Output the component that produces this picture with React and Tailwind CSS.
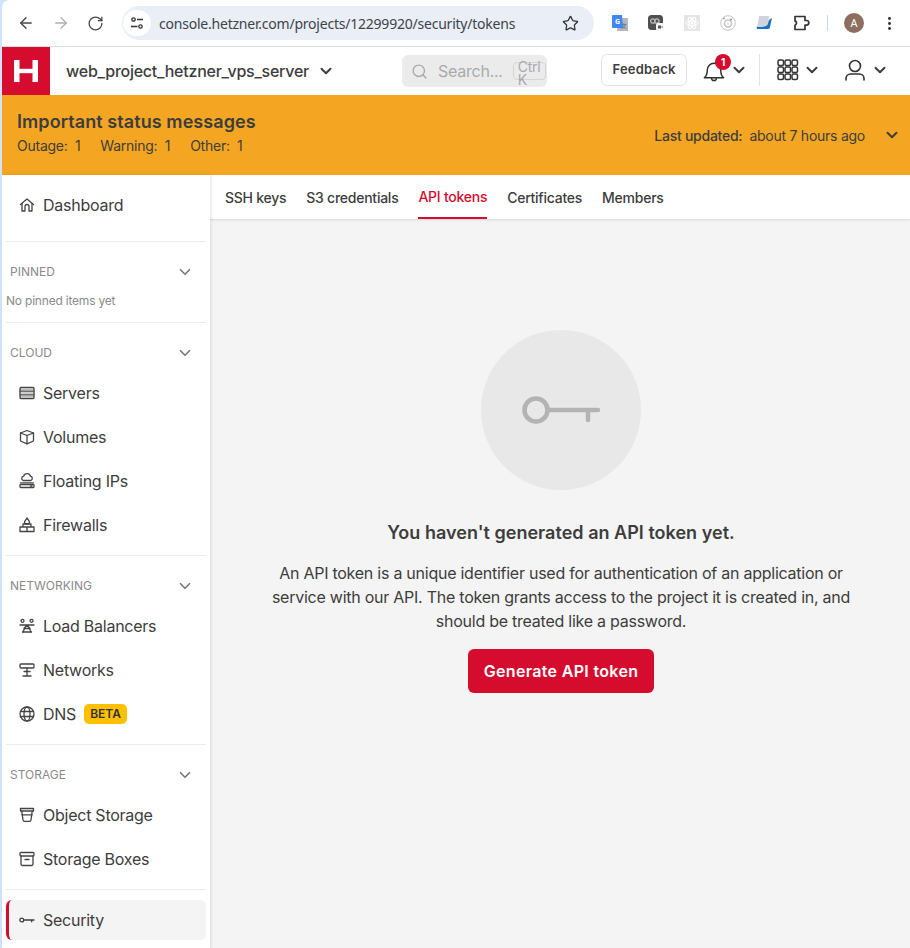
import React from "react";
import { ArrowLeft, ArrowRight, RotateCw, Star, Search, ChevronDown, EllipsisVertical } from "lucide-react";

const INTER = "font-['Inter',sans-serif]";

const Ico = ({ children, size = 18, sw = 1.3 }) => (
  <svg width={size} height={size} viewBox="0 0 18 18" fill="none" stroke="currentColor" strokeWidth={sw} strokeLinecap="round" strokeLinejoin="round" className="shrink-0">
    {children}
  </svg>
);

const HomeIcon = () => (
  <Ico>
    <path d="M2.500 8.500 9 3l6.500 5.500" />
    <path d="M4 7.500V15h3v-4.500a2 2 0 0 1 4 0V15h3V7.500" />
  </Ico>
);
const ServersIcon = () => (
  <Ico>
    <rect x="2" y="3.500" width="14" height="11" rx="1" />
    <path d="M2 7.200h14M2 10.800h14" />
    <path d="M2.500 5.300h13M2.500 9h13M2.500 12.700h13" strokeOpacity=".35" />
  </Ico>
);
const BoxIcon = () => (
  <Ico>
    <path d="M9 2.500 15.500 5v8L9 15.800 2.500 13V5z" />
    <path d="M2.500 5 9 7.500 15.500 5M9 7.500v8.300" />
  </Ico>
);
const FloatingIcon = () => (
  <Ico>
    <path d="M5 8.500a2.300 2.300 0 0 1 .6-4.300 3.600 3.600 0 0 1 6.900 0A2.300 2.300 0 0 1 13 8.500z" />
    <path d="M2.500 10.800h13" />
    <rect x="2" y="12.500" width="14" height="3" rx=".8" />
    <path d="M12.500 14h1.500" />
  </Ico>
);
const FirewallIcon = () => (
  <Ico>
    <path d="M9 2c.3 1.300 2.500 2 2.500 4.200 0 1-.8 1.800-2.500 1.800s-2.500-.8-2.500-1.800C6.500 4.800 8.500 3.800 9 2z" />
    <path d="M5 8h8v3H5zM2 11h14v4.500H2zM9 11v4.500" />
  </Ico>
);
const LoadBalancerIcon = () => (
  <Ico>
    <circle cx="4.500" cy="3.800" r="1.500" />
    <circle cx="13.500" cy="3.800" r="1.500" />
    <path d="M2 8h14M9 8l-3 3.500h6zM4.500 15h9" />
    <path d="M6.500 11.500 5 15M11.500 11.500 13 15" />
  </Ico>
);
const NetworkIcon = () => (
  <Ico>
    <rect x="2" y="3" width="14" height="4" rx="1" />
    <path d="M9 7v8M5 15h8M6 10.500h6" />
  </Ico>
);
const GlobeIcon = () => (
  <Ico>
    <circle cx="9" cy="9" r="7" />
    <ellipse cx="9" cy="9" rx="3" ry="7" />
    <path d="M2.500 6.500h13M2.500 11.500h13" />
  </Ico>
);
const BucketIcon = () => (
  <Ico>
    <path d="M2.500 2.500h13v2.500h-13z" />
    <path d="M3.800 5l1.200 9a1.500 1.500 0 0 0 1.500 1.300h5a1.500 1.500 0 0 0 1.500-1.300l1.200-9" />
    <path d="M3.800 8.800h10.400" />
  </Ico>
);
const StorageBoxIcon = () => (
  <Ico>
    <rect x="2" y="2.500" width="14" height="3.500" rx="1" />
    <path d="M3 6v8a1.500 1.500 0 0 0 1.500 1.500h9A1.500 1.500 0 0 0 15 14V6M7 9.500h4" />
  </Ico>
);
const KeyIcon = () => (
  <Ico>
    <circle cx="3.800" cy="9" r="1.900" />
    <path d="M5.700 9h10.300M13.700 9v1.800" />
  </Ico>
);

const NavItem = ({ icon, label, badge }) => (
  <div className="flex h-11 items-center gap-[7px] pl-[12px] text-[16px] text-[#3d3d3d]">
    <span className="text-[#444]">{icon}</span>
    <span>{label}</span>
    {badge && (
      <span className="ml-[1px] rounded-[5px] bg-[#ffc000] px-[6px] py-[1px] text-[12px] leading-[18px] font-semibold tracking-normal text-[#333]">
        {badge}
      </span>
    )}
  </div>
);

const SectionHead = ({ label }) => (
  <div className="flex h-[30px] items-center justify-between pr-[12px] pl-[4px] text-[12px] tracking-normal text-[#8a8a8a]">
    <span>{label}</span>
    <ChevronDown size={18} strokeWidth={2.2} className="text-[#777]" />
  </div>
);

const BrowserBar = () => (
  <div className="flex h-[47px] items-center rounded-tl-lg border-b border-[#dcdcdc] bg-white font-['Noto_Sans',sans-serif]">
    <div className="flex items-center gap-[17px] pr-[18px] pl-[15px] text-[#474747]">
      <ArrowLeft size={18} strokeWidth={1.8} />
      <ArrowRight size={18} strokeWidth={1.8} className="text-[#b0b0b0]" />
      <RotateCw size={17} strokeWidth={1.8} />
    </div>
    <div className="flex h-[34px] w-[472px] items-center rounded-full bg-[#e9eef7] pr-[15px] pl-[1px] text-[14px] tracking-[-0.22px] text-[#3f4349]">
      <span className="flex h-[26px] w-[28px] items-center justify-center rounded-full bg-white">
        <svg width="14" height="14" viewBox="0 0 14 14" fill="none" stroke="#333" strokeWidth="1.300">
          <circle cx="3.500" cy="3.500" r="1.700" />
          <circle cx="10.500" cy="10.500" r="1.700" />
          <path d="M7 3.500h6M1 10.500h6.500" />
        </svg>
      </span>
      <span className="ml-[8px] flex-1 truncate">console.hetzner.com/projects/12299920/security/tokens</span>
      <Star size={17} strokeWidth={1.8} className="text-[#333]" />
    </div>
    <div className="ml-[18px] flex items-center gap-[20px]">
      <svg width="16" height="16" viewBox="0 0 16 16">
        <rect x="5" y="3" width="11" height="13" fill="#b4b8bd" />
        <text x="12" y="13" fontSize="6" fill="#555" textAnchor="middle">文</text>
        <path d="M1 0h9l1 13H1a1 1 0 0 1-1-1V1a1 1 0 0 1 1-1z" fill="#4285f4" />
        <text x="5.300" y="9" fontSize="7" fontWeight="700" fill="#fff" textAnchor="middle">G</text>
      </svg>
      <svg width="16" height="16" viewBox="0 0 16 16">
        <rect width="15" height="15" rx="3.500" fill="#4f4f4f" />
        <circle cx="4.800" cy="6" r="2.200" fill="none" stroke="#bbb" strokeWidth="1.300" />
        <circle cx="8.800" cy="6" r="2.200" fill="none" stroke="#bbb" strokeWidth="1.300" />
        <rect x="8" y="8" width="8" height="8" rx="2" fill="#f5f5f5" />
        <path d="M10 10.500h3v3h-3zM13 12l1.500-1v2z" fill="#555" />
      </svg>
      <svg width="16" height="16" viewBox="0 0 16 16">
        <rect width="16" height="16" fill="#e6e6e6" />
        <g fill="none" stroke="#fff" strokeWidth="1">
          <ellipse cx="8" cy="8" rx="6" ry="2.400" />
          <ellipse cx="8" cy="8" rx="6" ry="2.400" transform="rotate(60 8 8)" />
          <ellipse cx="8" cy="8" rx="6" ry="2.400" transform="rotate(120 8 8)" />
        </g>
        <circle cx="8" cy="8" r="1.200" fill="#fff" />
      </svg>
      <svg width="16" height="16" viewBox="0 0 16 16" fill="none" stroke="#c4c4c4">
        <circle cx="8" cy="8" r="7.300" />
        <circle cx="8" cy="8.500" r="3.500" strokeWidth="1.500" />
        <circle cx="8" cy="8.500" r="1" fill="#ddd" stroke="none" />
        <circle cx="11" cy="4.500" r="1.100" fill="#999" stroke="none" />
        <circle cx="4" cy="3.500" r="1" fill="#aaa" stroke="none" />
      </svg>
      <svg width="16" height="16" viewBox="0 0 16 16">
        <path d="M3 1h10l-1 10H1.500z" fill="#cfd4da" />
        <path d="M13 5l3-2-2 9a2 2 0 0 1-2 2H1l-.5-2.500c4 .5 9 .5 11-1.500z" fill="#1a6fc4" />
      </svg>
    </div>
    <svg width="18" height="18" viewBox="0 0 18 18" fill="none" stroke="#333" strokeWidth="1.700" strokeLinejoin="round" className="ml-[20px] shrink-0">
      <path d="M3 2.500h10v4h1.500a2.300 2.300 0 0 1 0 4.600H13v4.400H3v-4.300a2.300 2.300 0 0 0 0-4.300z" />
    </svg>
    <span className="ml-[17px] h-[16px] w-[1px] bg-[#c5d7f0]" />
    <span className="ml-[16px] flex h-5 w-5 items-center justify-center rounded-full bg-[#8d6e5f] text-[11px] text-white">A</span>
    <EllipsisVertical size={17} strokeWidth={2.2} className="ml-[17px] text-[#333]" />
  </div>
);

const AppHeader = () => (
  <div className="flex h-[48px] items-center bg-white">
    <div className="flex h-[48px] w-[48px] shrink-0 items-center justify-center bg-[#d50c2d]">
      <svg width="24" height="22" viewBox="0 0 24 22" fill="#fff">
        <rect width="5.500" height="22" rx=".5" />
        <rect x="18.500" width="5.500" height="22" rx=".5" />
        <rect y="8.800" width="24" height="4.400" />
      </svg>
    </div>
    <span className="ml-[16px] text-[16px] font-medium text-[#3d3d3d]">web_project_hetzner_vps_server</span>
    <ChevronDown size={18} strokeWidth={2.6} className="mx-[8px] text-[#3d3d3d]" />
    <div className="ml-[59px] flex h-8 w-[145px] shrink-0 items-center rounded-md bg-[#ebebeb] pl-[9px] text-[16px] text-[#aaa]">
      <Search size={17} strokeWidth={2} className="shrink-0 text-[#aaa]" />
      <span className="ml-[10px]">Search...</span>
      <span className="ml-[10px] h-[18px] w-[33px] shrink-0 rounded-[4px] border border-[#d5d5d5] pl-[4px] text-[14px] leading-[13px]">
        <span className="-mt-[3px] block">Ctrl K</span>
      </span>
    </div>
    <div className="ml-[54px] -mt-[2px] flex h-[32px] w-[86px] shrink-0 items-center justify-center rounded-md border border-[#e3e3e3] text-[13px] font-semibold tracking-[0.2px] text-[#3d3d3d]">
      Feedback
    </div>
    <div className="relative ml-[16px] -mt-[1px] text-[#2f2f2f]">
      <svg width="22" height="23" viewBox="0 0 22 24" fill="none" stroke="currentColor" strokeWidth="1.500" strokeLinecap="round" strokeLinejoin="round">
        <path d="M1 19.500c2-1.500 3-3 3-8a7 7 0 0 1 14 0c0 5 1 6.500 3 8z" />
        <path d="M8.500 20a2.500 2.500 0 0 0 5 0" />
      </svg>
      <span className="absolute top-[-5px] left-[12px] flex h-4 w-4 items-center justify-center rounded-full bg-[#d50c2d] text-[10px] font-bold tracking-normal text-white">1</span>
    </div>
    <ChevronDown size={18} strokeWidth={2.6} className="ml-[5px] -mt-[2px] text-[#3d3d3d]" />
    <span className="ml-[11px] -mt-[2px] h-[32px] w-[1px] bg-[#e3e3e3]" />
    <svg width="22" height="22" viewBox="0 0 22 22" fill="none" stroke="#333" strokeWidth="1.500" className="ml-[17px] -mt-[2px] shrink-0">
      {[1, 8, 15].map((x) =>
        [1, 8, 15].map((y) => <rect key={`${x}-${y}`} x={x} y={y} width="5.500" height="5.500" rx="1.500" />)
      )}
    </svg>
    <ChevronDown size={18} strokeWidth={2.6} className="ml-[4px] -mt-[2px] text-[#3d3d3d]" />
    <svg width="22" height="22" viewBox="0 0 22 22" fill="none" stroke="#333" strokeWidth="1.600" strokeLinecap="round" className="ml-[23px] -mt-[2px] shrink-0">
      <circle cx="11" cy="7" r="5.500" />
      <path d="M2 21v-1.500A4.500 4.500 0 0 1 6.500 15h9a4.500 4.500 0 0 1 4.500 4.500V21" />
    </svg>
    <ChevronDown size={18} strokeWidth={2.6} className="ml-[5px] -mt-[2px] text-[#3d3d3d]" />
  </div>
);

const StatusBanner = () => (
  <div className="flex h-[80px] items-center justify-between bg-[#f4a623] pr-[9px] pl-[15px] text-[#3d3d3d]">
    <div className="-mt-[5px]">
      <div className="text-[18px] leading-[24px] font-semibold tracking-[0.08px]">Important status messages</div>
      <div className="mt-[2px] flex gap-[20px] text-[14px] leading-[20px]">
        <span>Outage:&nbsp; 1</span>
        <span>Warning:&nbsp; 1</span>
        <span>Other:&nbsp; 1</span>
      </div>
    </div>
    <div className="flex items-center text-[14px]">
      <span className="font-medium">Last updated:</span>
      <span className="ml-[7px]">about 7 hours ago</span>
      <ChevronDown size={18} strokeWidth={2.6} className="ml-[18px]" />
    </div>
  </div>
);

const Sidebar = () => (
  <aside className="z-10 w-[208px] shrink-0 bg-white pr-[4px] pl-[4px] shadow-[1px_0_3px_rgba(0,0,0,0.12)]">
    <div className="border-b border-[#ececec] pt-[8px] pb-[14px]">
      <NavItem icon={<HomeIcon />} label="Dashboard" />
    </div>
    <div className="h-[81px] border-b border-[#ececec] pt-[15px]">
      <SectionHead label="PINNED" />
      <div className="mt-[6px] text-[12px] leading-[16px] tracking-[-0.2px] text-[#8a8a8a]">No pinned items yet</div>
    </div>
    <div className="border-b border-[#ececec] pt-[15px] pb-[8px]">
      <SectionHead label="CLOUD" />
      <div className="pt-[3px]">
        <NavItem icon={<ServersIcon />} label="Servers" />
        <NavItem icon={<BoxIcon />} label="Volumes" />
        <NavItem icon={<FloatingIcon />} label="Floating IPs" />
        <NavItem icon={<FirewallIcon />} label="Firewalls" />
      </div>
    </div>
    <div className="border-b border-[#ececec] pt-[15px] pb-[8px]">
      <SectionHead label="NETWORKING" />
      <div className="pt-[3px]">
        <NavItem icon={<LoadBalancerIcon />} label="Load Balancers" />
        <NavItem icon={<NetworkIcon />} label="Networks" />
        <NavItem icon={<GlobeIcon />} label="DNS" badge="BETA" />
      </div>
    </div>
    <div className="border-b border-[#ececec] pt-[15px] pb-[8px]">
      <SectionHead label="STORAGE" />
      <div className="pt-[3px]">
        <NavItem icon={<BucketIcon />} label="Object Storage" />
        <NavItem icon={<StorageBoxIcon />} label="Storage Boxes" />
      </div>
    </div>
    <div className="mt-[10px] h-10 overflow-hidden rounded-md border-l-[3px] border-[#d50c2d] bg-[#f4f4f4]">
      <div className="flex h-10 items-center gap-[7px] pl-[9px] text-[16px] text-[#3d3d3d]">
        <KeyIcon />
        <span>Security</span>
      </div>
    </div>
  </aside>
);

const Tabs = () => (
  <div className="flex h-[44px] items-stretch gap-[20px] bg-white pl-[15px] text-[14px] font-medium text-[#3d3d3d] shadow-[0_1px_2px_rgba(0,0,0,0.12)]">
    <span className="flex items-center">SSH keys</span>
    <span className="flex items-center">S3 credentials</span>
    <span className="flex items-center border-b-2 border-[#d50c2d] text-[#d50c2d]">API tokens</span>
    <span className="flex items-center">Certificates</span>
    <span className="flex items-center">Members</span>
  </div>
);

const EmptyState = () => (
  <div className="flex flex-col items-center pt-[111px] pl-[2px]">
    <div className="flex h-40 w-40 items-center justify-center rounded-full bg-[#e8e8e8]">
      <svg width="80" height="30" viewBox="0 0 80 30" fill="none" stroke="#b3b3b3" strokeWidth="4.500" strokeLinecap="round">
        <circle cx="15" cy="15" r="11.500" />
        <path d="M27 15h50M67 15v10" />
      </svg>
    </div>
    <h2 className="mt-[31px] text-[18px] leading-[24px] font-semibold tracking-[0.02px] text-[#3d3d3d]">You haven't generated an API token yet.</h2>
    <p className="mt-[16px] w-[600px] text-center text-[16px] leading-[24px] text-[#3d3d3d]">
      An API token is a unique identifier used for authentication of an application or service with our API. The token grants access to the project it is created in, and should be treated like a password.
    </p>
    <button className="mt-[16px] h-[44px] w-[186px] rounded-md bg-[#d50c2d] text-[16px] font-semibold tracking-[0.33px] text-white">
      Generate API token
    </button>
  </div>
);

export default function App() {
  return (
    <div className={`h-[948px] w-[910px] overflow-hidden bg-[#d3e3fd] pl-[2px] tracking-[-0.25px] ${INTER}`}>
      <BrowserBar />
      <AppHeader />
      <StatusBanner />
      <div className="flex h-[773px]">
        <Sidebar />
        <main className="min-w-0 flex-1 bg-[#f4f4f4]">
          <Tabs />
          <EmptyState />
        </main>
      </div>
    </div>
  );
}
